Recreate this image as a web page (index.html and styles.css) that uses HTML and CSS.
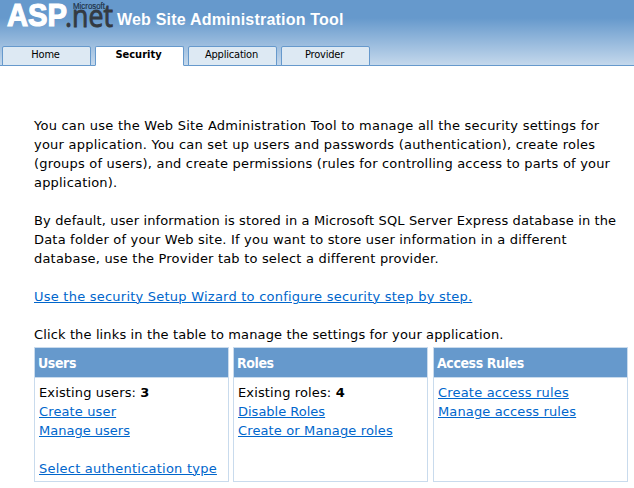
FILE: index.html
```html
<!DOCTYPE html>
<html lang="en">
<head>
<meta charset="utf-8">
<title>Web Site Administration Tool</title>
<link rel="stylesheet" href="styles.css">
</head>
<body>
<header class="header">
  <div class="brand">
    <svg class="logo" width="117" height="38" viewBox="0 0 117 38" role="img" aria-label="Microsoft ASP.net">
      <text class="logo-asp" x="7" y="26" textLength="60" lengthAdjust="spacingAndGlyphs">ASP</text>
      <text class="logo-net" x="65" y="27" textLength="48" lengthAdjust="spacingAndGlyphs">.net</text>
      <text class="logo-ms" x="73" y="9" textLength="32" lengthAdjust="spacingAndGlyphs">Microsoft</text>
    </svg>
    <h1 class="title">Web Site Administration Tool</h1>
  </div>
  <nav class="tabs">
    <a class="tab">Home</a>
    <a class="tab active">Security</a>
    <a class="tab">Application</a>
    <a class="tab">Provider</a>
  </nav>
</header>
<main class="content">
  <p><span class="wide">You can use the Web Site Administration Tool to manage all the security settings for</span><br><span class="wide">your application. You can set up users and passwords (authentication), create roles</span><br>(groups of users), and create permissions (rules for controlling access to parts of your<br>application).</p>
  <p><span class="snug">By default, user information is stored in a Microsoft SQL Server Express database in the</span><br>Data folder of your Web site. If you want to store user information in a different<br>database, use the Provider tab to select a different provider.</p>
  <p><a class="link wide">Use the security Setup Wizard to configure security step by step.</a></p>
  <p class="hint snug">Click the links in the table to manage the settings for your application.</p>
  <div class="panels">
    <section class="panel">
      <h2>Users</h2>
      <div class="body">
        <div class="snug">Existing users: <b>3</b></div>
        <div><a class="link snug">Create user</a></div>
        <div><a class="link tight">Manage users</a></div>
        <div class="gap"><a class="link wide">Select authentication type</a></div>
      </div>
    </section>
    <section class="panel">
      <h2>Roles</h2>
      <div class="body">
        <div class="snug">Existing roles: <b>4</b></div>
        <div><a class="link tight">Disable Roles</a></div>
        <div><a class="link snug">Create or Manage roles</a></div>
      </div>
    </section>
    <section class="panel">
      <h2>Access Rules</h2>
      <div class="body">
        <div><a class="link">Create access rules</a></div>
        <div><a class="link snug">Manage access rules</a></div>
      </div>
    </section>
  </div>
</main>
</body>
</html>
```
FILE: styles.css
```css
* { box-sizing: border-box; }
body {
  margin: 0;
  height: 488px;
  overflow: hidden;
  background: #fff;
  color: #000;
  font: 13px/19px "DejaVu Sans", Verdana, sans-serif;
  letter-spacing: 0.19px;
}
.wide { letter-spacing: 0.23px; }
.snug { letter-spacing: 0.13px; }
.tight { letter-spacing: 0; }
.header {
  height: 66px;
  display: flex;
  flex-direction: column;
  justify-content: space-between;
  background: linear-gradient(#6699cc 0, #6699cc 18px, #c4d8ec 65px);
  border-bottom: 1px solid #6699cc;
}
.brand { display: flex; height: 38px; }
.logo { flex: none; overflow: visible; font-family: "Liberation Sans", Arial, sans-serif; letter-spacing: 0; }
.logo-asp { font-size: 31px; font-weight: bold; fill: #fff; stroke: #fff; stroke-width: 1.2; }
.logo-net { font-family: "Open Sans", sans-serif; font-size: 31px; fill: #333a42; stroke: #333a42; stroke-width: 0.9; }
.logo-ms { font-size: 8.5px; fill: #1f3348; stroke: #1f3348; stroke-width: 0.2; }
.title {
  margin: 0;
  color: #fff;
  font: bold 16px/39px "Liberation Sans", Arial, sans-serif;
  letter-spacing: 0.2px;
  white-space: nowrap;
}
.tabs { display: flex; gap: 4px; padding-left: 2px; margin-bottom: -1px; }
.tab {
  width: 89px;
  height: 20px;
  padding-right: 2px;
  border: 1px solid #6699cc;
  border-radius: 2px 2px 0 0;
  background: #dde9f3;
  text-align: center;
  font: 11px/16px "DejaVu Sans Condensed", Tahoma, sans-serif;
  letter-spacing: -0.2px;
}
.tab.active { background: #fff; border-bottom-color: #fff; font-weight: bold; letter-spacing: 0; }
.content { padding: 50px 0 0 34px; white-space: nowrap; }
p { margin: 0 0 19px; }
.link { color: #0066cc; text-decoration: underline; text-underline-offset: 1px; text-decoration-thickness: 1px; }
.hint { margin-bottom: 3px; }
.panels { display: grid; grid-template-columns: 199px 200px 195px; }
.panel { width: 195px; height: 135px; border: 1px solid #c9dbed; }
.panel h2 {
  margin: 0;
  height: 30px;
  padding-left: 3px;
  background: #6699cc;
  border-bottom: 1px solid #c9dbed;
  color: #fff;
  font: bold 14px/31px "DejaVu Sans Condensed", Tahoma, sans-serif;
  letter-spacing: -0.4px;
}
.body { padding: 5px 4px; }
.gap { margin-top: 19px; }
```
